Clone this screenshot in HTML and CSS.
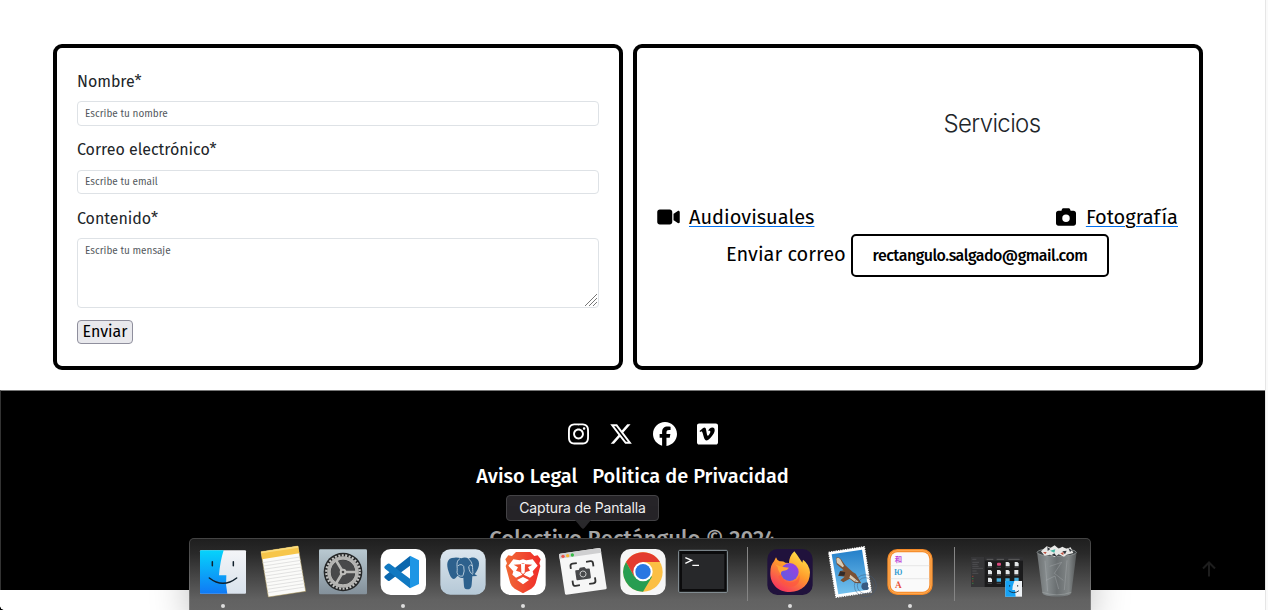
FILE: index.html
```html
<!DOCTYPE html>
<html lang="es">
<head>
<meta charset="utf-8">
<title>Colectivo Rectángulo</title>
<link rel="stylesheet" href="styles.css">
</head>
<body>
<div class="page">
  <main class="cards">
    <form class="card form">
      <label class="label" for="nombre">Nombre*</label>
      <input class="field field-name" id="nombre" type="text" placeholder="Escribe tu nombre">
      <label class="label label-mail" for="email">Correo electrónico*</label>
      <input class="field" id="email" type="text" placeholder="Escribe tu email">
      <label class="label" for="mensaje">Contenido*</label>
      <div class="area">
        <textarea class="field field-area" id="mensaje" placeholder="Escribe tu mensaje"></textarea>
        <svg class="grip" viewBox="0 0 14 14"><path d="M1 13L13 1M5 13l8-8M9 13l4-4" stroke="#777" stroke-width="1" fill="none"/></svg>
      </div>
      <button class="submit" type="button">Enviar</button>
    </form>
    <section class="card services">
      <h2 class="title">Servicios</h2>
      <div class="links">
        <div class="link-group">
          <svg class="ico-video" viewBox="0 0 576 512"><path d="M0 128C0 92.7 28.7 64 64 64H320c35.3 0 64 28.7 64 64V384c0 35.3-28.7 64-64 64H64c-35.3 0-64-28.7-64-64V128zM559.1 99.8c10.4 5.6 16.9 16.4 16.9 28.2V384c0 11.8-6.5 22.6-16.9 28.2s-23 5-32.9-1.6l-96-64L416 337.1V320 192 174.9l14.2-9.5 96-64c9.8-6.5 22.4-7.2 32.9-1.6z"/></svg>
          <a class="link" href="#">Audiovisuales</a>
        </div>
        <div class="link-group">
          <svg class="ico-camera" viewBox="0 0 512 512"><path d="M149.1 64.8L138.7 96H64C28.7 96 0 124.7 0 160V416c0 35.3 28.7 64 64 64H448c35.3 0 64-28.7 64-64V160c0-35.3-28.7-64-64-64H373.3L362.9 64.8C356.4 45.2 338.1 32 317.4 32H194.6c-20.7 0-39 13.2-45.5 32.8zM256 192a96 96 0 1 1 0 192 96 96 0 1 1 0-192z"/></svg>
          <a class="link" href="#">Fotografía</a>
        </div>
      </div>
      <div class="contact"><span class="contact-text">Enviar correo</span><a class="mail" href="#"><span>rectangulo.salgado@gmail.com</span></a></div>
    </section>
  </main>
  <footer class="footer">
    <div class="social">
      <svg class="s-narrow" viewBox="0 0 448 512"><path d="M224.1 141c-63.6 0-114.9 51.3-114.9 114.9s51.3 114.9 114.9 114.9S339 319.5 339 255.9 287.7 141 224.1 141zm0 189.6c-41.1 0-74.7-33.5-74.7-74.7s33.5-74.7 74.7-74.7 74.7 33.5 74.7 74.7-33.6 74.7-74.7 74.7zm146.4-194.3c0 14.9-12 26.8-26.8 26.8-14.9 0-26.8-12-26.8-26.8s12-26.8 26.8-26.8 26.8 12 26.8 26.8zm76.1 27.2c-1.7-35.9-9.9-67.7-36.2-93.9-26.2-26.2-58-34.4-93.9-36.2-37-2.1-147.9-2.1-184.9 0-35.8 1.7-67.6 9.9-93.9 36.1s-34.4 58-36.2 93.9c-2.1 37-2.1 147.9 0 184.9 1.7 35.9 9.9 67.7 36.2 93.9s58 34.4 93.9 36.2c37 2.1 147.9 2.1 184.9 0 35.9-1.7 67.7-9.9 93.9-36.2 26.2-26.2 34.4-58 36.2-93.9 2.1-37 2.1-147.8 0-184.8zM398.8 388c-7.8 19.6-22.9 34.7-42.6 42.6-29.5 11.7-99.5 9-132.1 9s-102.7 2.6-132.1-9c-19.6-7.8-34.7-22.9-42.6-42.6-11.7-29.5-9-99.5-9-132.1s-2.6-102.7 9-132.1c7.8-19.6 22.9-34.7 42.6-42.6 29.5-11.7 99.5-9 132.1-9s102.7-2.6 132.1 9c19.6 7.8 34.7 22.9 42.6 42.6 11.7 29.5 9 99.5 9 132.1s2.7 102.7-9 132.1z"/></svg>
      <svg class="s-wide" viewBox="0 0 512 512"><path d="M389.2 48h70.6L305.6 224.2 487 464H345L233.7 318.6 106.5 464H35.8L200.7 275.5 26.8 48H172.4L272.9 180.9 389.2 48zM364.4 421.8h39.1L151.1 88h-42L364.4 421.8z"/></svg>
      <svg class="s-wide" viewBox="0 0 512 512"><path d="M512 256C512 114.6 397.4 0 256 0S0 114.6 0 256C0 376 82.7 476.8 194.2 504.5V334.2H141.4V256h52.8V222.3c0-87.1 39.4-127.5 125-127.5c16.2 0 44.2 3.2 55.7 6.4V172c-6-.6-16.5-1-29.6-1c-42 0-58.2 15.9-58.2 57.2V256h83.6l-14.4 78.2H287V510.1C413.8 494.8 512 386.9 512 256h0z"/></svg>
      <svg class="s-narrow" viewBox="0 0 448 512"><path d="M403.2 32H44.8C20.1 32 0 52.1 0 76.8v358.4C0 459.9 20.1 480 44.8 480h358.4c24.7 0 44.8-20.1 44.8-44.8V76.8c0-24.7-20.1-44.8-44.8-44.8zM377 180.8c-1.4 31.5-23.4 74.7-66 129.4-44 57.2-81.3 85.8-111.7 85.8-18.9 0-34.8-17.4-47.9-52.3-25.5-93.3-36.400-148-57.400-148-2.400 0-10.900 5.100-25.400 15.200l-15.200-19.600c37.300-32.800 72.900-69.200 95.200-71.200 25.200-2.400 40.700 14.800 46.500 51.700 20.700 131.200 29.900 151 67.600 91.600 13.500-21.400 20.800-37.700 21.800-48.900 3.500-33.200-25.900-30.900-45.800-22.400 15.900-52.100 46.300-77.400 91.200-76 33.300.9 49 22.500 47.100 64.700z"/></svg>
    </div>
    <nav class="legal"><a href="#">Aviso Legal</a><a href="#">Politica de Privacidad</a></nav>
    <p class="copy">Colectivo Rectángulo © 2024</p>
    <svg class="to-top" viewBox="0 0 14 16"><path d="M7 15.500V1.500M1 7.500l6-6 6 6" fill="none" stroke="#1d1d1d" stroke-width="2"/></svg>
  </footer>
</div>

<div class="tooltip">Captura de Pantalla</div>
<div class="dock">
  <!-- Finder -->
  <svg class="app" viewBox="39 24 180 216">
    <defs>
      <linearGradient id="fb" x1="0" y1="0" x2="0" y2="1"><stop offset="0" stop-color="#06d3fb"/><stop offset="1" stop-color="#1079f5"/></linearGradient>
      <linearGradient id="fw" x1="0" y1="0" x2="0" y2="1"><stop offset="0" stop-color="#f4f5f8"/><stop offset="1" stop-color="#d9e2ec"/></linearGradient>
    </defs>
    <rect x="60" y="61" width="138" height="130" rx="3" fill="url(#fw)"/>
    <path d="M63 61H131Q120 95 117 136H139Q136 165 142 191H63Q60 191 60 188V64Q60 61 63 61Z" fill="url(#fb)"/>
    <path d="M97 95v12M160 95v12M88 144Q129 176 170 144" fill="none" stroke="#10202c" stroke-width="4.500" stroke-linecap="round"/>
    <circle cx="129" cy="228" r="6" fill="#ddd"/>
  </svg>
  <!-- Notes -->
  <svg class="app" viewBox="219 24 180 216">
    <path d="M243 65L354 48L377 184L265 201Z" fill="#fbfbf9" stroke="#b09a58" stroke-width="1.500"/>
    <path d="M243 65L354 48L358 70L246 88Z" fill="#f7c64a"/>
    <path d="M243 65L354 48L355 53L244 70Z" fill="#fbdc7d"/>
    <path d="M248 98l112-17M250 108l112-17M251 118l112-17M253 128l112-17M255 138l112-17M256 148l112-17M258 158l112-17M260 168l112-17M261 178l112-17M263 188l112-17" stroke="#d5d5d5" stroke-width="2"/>
  </svg>
  <!-- Settings -->
  <svg class="app" viewBox="399 24 180 216">
    <defs><linearGradient id="sg" x1="0" y1="0" x2="0" y2="1"><stop offset="0" stop-color="#b9c9d1"/><stop offset="1" stop-color="#83909a"/></linearGradient></defs>
    <rect x="417" y="58" width="144" height="135" rx="4" fill="url(#sg)"/>
    <circle cx="489" cy="126" r="58" fill="#252728"/>
    <circle cx="489" cy="126" r="50" fill="none" stroke="#c4c4c2" stroke-width="7" stroke-dasharray="6 4.470"/>
    <circle cx="489" cy="126" r="42" fill="none" stroke="#b3b3b1" stroke-width="11"/>
    <circle cx="489" cy="126" r="36" fill="#48494a"/>
    <path d="M489 126H530M489 126L468 91M489 126L468 161" stroke="#b8b8b5" stroke-width="8"/>
    <circle cx="489" cy="126" r="10" fill="#c0c0bd"/><circle cx="489" cy="126" r="4" fill="#444"/>
  </svg>
  <!-- Visual Studio Code -->
  <svg class="app" viewBox="-81 24 180 216">
    <rect x="-58" y="57" width="136" height="138" rx="30" fill="#fff"/>
    <path d="M30 78V107L-31 152Q-35 154-38 151L-46 144Q-49 140-45 137Z" fill="#0a67ae"/>
    <path d="M30 175V146L-31 101Q-35 99-38 102L-46 109Q-49 113-45 116Z" fill="#1079c2"/>
    <path d="M30 77L57 91V162L30 175Z" fill="#1e96e5"/>
    <circle cx="9" cy="228" r="6" fill="#ddd"/>
  </svg>
  <!-- PostgreSQL -->
  <svg class="app" viewBox="99 24 180 216">
    <defs><linearGradient id="pg" x1="0" y1="0" x2="0" y2="1"><stop offset="0" stop-color="#dce6ee"/><stop offset="1" stop-color="#b5c8d6"/></linearGradient></defs>
    <rect x="121" y="58" width="136" height="136" rx="30" fill="url(#pg)"/>
    <path d="M163 83C140 83 138 102 146 125C151 141 158 151 166 145L173 137Q182 147 190 143L192 169Q193 179 202 178Q214 178 215 164L217 139L232 138L224 132C238 116 242 94 230 86C221 80 210 84 206 86Q195 80 184 85Q173 82 163 83Z" fill="#2d618d"/>
    <path d="M180 86C165 94 174 112 171 127Q173 141 189 138M205 86C220 97 217 116 219 130M173 108Q184 99 191 109Q195 123 189 137M218 108Q210 101 206 110Q208 129 219 133" fill="none" stroke="#cddbe6" stroke-width="2.500"/>
  </svg>
  <!-- Brave -->
  <svg class="app" viewBox="279 24 180 216">
    <defs><linearGradient id="br" x1="0" y1="0" x2="1" y2="0"><stop offset="0" stop-color="#f06a35"/><stop offset="1" stop-color="#f02b29"/></linearGradient></defs>
    <rect x="301" y="57" width="136" height="138" rx="30" fill="#fff"/>
    <path d="M348 66H391L403 78L413 76L422 88L418 100L421 108L407 160Q404 170 394 176L369 190L344 176Q334 170 331 160L317 108L321 100L316 88L325 76L336 78Z" fill="url(#br)"/>
    <path d="M340 88L359 91L369 88L379 91L398 88L413 107L398 124L401 134L390 143L371 134L378 126L390 122L384 112L397 104L377 103L369 100L361 103L341 104L354 112L348 122L360 126L367 134L348 143L337 134L340 124L325 107Z" fill="#fff"/>
    <path d="M351 150L369 141L387 150L369 163Z" fill="#fff"/>
    <path d="M363 102H375L374 128L369 132L364 128Z" fill="#fff"/>
    <circle cx="369" cy="228" r="6" fill="#ddd"/>
  </svg>
  <!-- Screenshot -->
  <svg class="app" viewBox="459 24 180 216">
    <path d="M480 71L598 54Q601 54 602 57L620 174Q620 177 617 178L499 194Q496 194 495 191L477 75Q477 72 480 71Z" fill="#f6f6f6"/>
    <path d="M480 71L598 54Q601 54 602 57L604 68L479 86L477 75Q477 72 480 71Z" fill="#cfcfd0"/>
    <circle cx="489" cy="79" r="5" fill="#f0544c"/><circle cx="503" cy="77" r="5" fill="#f5b833"/><circle cx="517" cy="75" r="5" fill="#35bd45"/>
    <g transform="rotate(-8 549 131)">
      <path d="M515 112V104Q515 97 522 97H535M563 97H576Q583 97 583 104V114M583 147V157Q583 164 576 164H563M535 164H522Q515 164 515 157V147" fill="none" stroke="#333" stroke-width="5.500"/>
      <path d="M529 118H538L542 112H556L560 118H569Q571 118 571 121V145Q571 148 568 148H530Q527 148 527 145V121Q527 118 529 118Z" fill="#47484a"/>
      <circle cx="549" cy="132" r="9" fill="none" stroke="#ddd" stroke-width="2.500"/>
    </g>
  </svg>
  <!-- Chrome -->
  <svg class="app" viewBox="9 24 180 216">
    <rect x="31" y="57" width="136" height="138" rx="30" fill="#f6f6f6"/>
    <circle cx="99" cy="126" r="59" fill="#fbbf44"/>
    <path d="M99 96H150A59 59 0 0 0 48 96L73 140Z" fill="#e33b2e"/>
    <path d="M48 96A59 59 0 0 0 99 185L126 140L99 126L73 140Z" fill="#279d51"/>
    <circle cx="99" cy="125" r="29" fill="#fff"/><circle cx="99" cy="125" r="23" fill="#2878e2"/>
  </svg>
  <!-- Terminal -->
  <svg class="app" viewBox="189 24 180 216">
    <rect x="206" y="61" width="146" height="126" rx="3" fill="#0b0b0c" stroke="#8e9aa1" stroke-width="3"/>
    <rect x="216" y="72" width="127" height="105" fill="#27282a"/>
    <path d="M226 83L245 91L226 100M247 106H267" fill="none" stroke="#fff" stroke-width="4"/>
  </svg>
  <span class="divider"></span>
  <!-- Firefox -->
  <svg class="app" viewBox="450 24 180 216">
    <defs>
      <linearGradient id="ff" x1=".8" y1="0" x2=".2" y2="1"><stop offset="0" stop-color="#ffe94a"/><stop offset=".45" stop-color="#ff9b2c"/><stop offset="1" stop-color="#f52b62"/></linearGradient>
      <linearGradient id="fp" x1="1" y1="0" x2="0" y2="1"><stop offset="0" stop-color="#a13be2"/><stop offset="1" stop-color="#5b5fe0"/></linearGradient>
    </defs>
    <rect x="472" y="57" width="136" height="138" rx="30" fill="#20123c"/>
    <path d="M553 64Q562 75 570 88L577 98L579 89Q598 103 600 127C600 163 575 186 540 186C505 186 480 162 481 128Q481 105 492 94L498 82Q501 92 509 94Q520 93 526 98L537 99Q538 78 553 64Z" fill="url(#ff)"/>
    <circle cx="539" cy="126" r="27" fill="url(#fp)"/>
    <path d="M495 103Q512 112 537 113Q531 123 520 122Q511 123 513 134Q503 120 503 111Z" fill="#ffa436"/>
    <path d="M513 134Q520 159 543 157Q564 154 568 134Q573 166 542 171Q514 168 505 139Z" fill="#ff553f" opacity=".65"/>
    <circle cx="540" cy="228" r="6" fill="#ddd"/>
  </svg>
  <!-- Mail -->
  <svg class="app" viewBox="0 24 180 216">
    <defs><linearGradient id="ml" x1="0" y1="0" x2="0" y2="1"><stop offset="0" stop-color="#247fc9"/><stop offset="1" stop-color="#75c2ee"/></linearGradient></defs>
    <path d="M26 67L133 50L154 186L48 202Z" fill="#fff" stroke="#fff" stroke-width="4" stroke-dasharray="4 3"/>
    <path d="M35 73L126 59L145 179L55 193Z" fill="url(#ml)"/>
    <path d="M48 84Q55 78 63 88L76 106L88 117Q98 127 107 131L124 160L105 159L89 146L70 157L61 151L74 140L54 137L61 123L71 121L50 103Z" fill="#7b5134"/>
    <path d="M49 86Q55 80 61 88L72 108L68 112L51 99ZM91 134L117 156L105 155L88 143Z" fill="#d9cbb5"/>
    <path d="M60 124L76 127L73 137L56 137Z" fill="#332a29"/>
    <g fill="none" stroke="#42597a" stroke-width="2.500" opacity=".55"><circle cx="136" cy="167" r="33"/><circle cx="136" cy="167" r="24"/></g>
    <path d="M133 158Q145 154 145 164Q141 169 147 174Q143 183 135 179Q127 183 124 171Q124 158 133 158Z" fill="#385b83"/>
  </svg>
  <!-- Character viewer -->
  <svg class="app glyphs" viewBox="180 24 180 216">
    <rect x="202" y="57" width="136" height="138" rx="30" fill="#f58a28"/>
    <rect x="207" y="62" width="126" height="128" rx="26" fill="none" stroke="#ffae56" stroke-width="3"/>
    <rect x="212" y="67" width="116" height="118" rx="20" fill="#fafafa"/>
    <path d="M212 107H328M212 146H328" stroke="#ddd" stroke-width="2"/>
    <text x="224" y="95" fill="#bd4bd8">和</text>
    <text class="latin" x="223" y="135" textLength="24" lengthAdjust="spacingAndGlyphs" fill="#2b99cf">Ю</text>
    <text class="latin" x="225" y="175" textLength="20" lengthAdjust="spacingAndGlyphs" fill="#e94f35">Å</text>
    <circle cx="270" cy="228" r="6" fill="#ddd"/>
  </svg>
  <span class="divider"></span>
  <!-- Minimised Finder window -->
  <svg class="app" viewBox="441 24 180 216">
    <rect x="453" y="81" width="156" height="90" fill="#1b1b1c"/>
    <rect x="453" y="81" width="41" height="90" fill="#363638"/>
    <rect x="494" y="81" width="115" height="11" fill="#303032"/>
    <path d="M457 88h12M457 97h20M457 103h16M457 109h19M457 115h32M457 123h13M457 130h18" stroke="#5b5b5e" stroke-width="2"/>
    <path d="M457 139h3M457 153h3" stroke="#b8472f" stroke-width="3"/><path d="M457 146h3M457 160h3" stroke="#3c9645" stroke-width="3"/>
    <path d="M500 88h20M530 88h22M565 88h34" stroke="#777" stroke-width="2"/>
    <g fill="#e2e5e8"><path d="M504 96h8l4 4v9h-12zM557 96h8l4 4v9h-12zM584 96h8l4 4v9h-12zM504 120h8l4 4v9h-12zM531 120h8l4 4v9h-12zM557 120h8l4 4v9h-12zM504 143h8l4 4v9h-12z"/><rect x="583" y="120" width="12" height="13"/></g>
    <rect x="531" y="98" width="12" height="9" rx="3" fill="#da487e"/>
    <path d="M530 145h13v10h-13zM556 145h13v10h-13zM583 143h13v10h-13z" fill="#42aee0"/>
    <path d="M503 112h13M530 112h13M556 112h14M583 112h13M503 136h13M530 136h13M556 136h14M583 136h13M503 160h13M530 160h13" stroke="#717174" stroke-width="1.500"/>
    <rect x="556" y="153" width="50" height="47" fill="#edf1f5"/><path d="M556 153H583Q577 167 577 180H585L587 200H556Z" fill="#15a2f5"/>
    <path d="M569 165v5M593 165v5M566 182Q581 194 597 182" fill="none" stroke="#142434" stroke-width="2.500"/>
  </svg>
  <!-- Trash -->
  <svg class="app" viewBox="621 24 180 216">
    <defs><linearGradient id="tr"><stop offset="0" stop-color="#6d7172"/><stop offset=".25" stop-color="#878d8f"/><stop offset=".5" stop-color="#696e70"/><stop offset=".8" stop-color="#818687"/><stop offset="1" stop-color="#535657"/></linearGradient></defs>
    <path d="M651 66Q710 91 770 66L754 189Q752 199 711 200Q669 199 667 189Z" fill="url(#tr)"/>
    <ellipse cx="710" cy="67" rx="59" ry="12" fill="#3b3f41" stroke="#a2a7a8" stroke-width="2"/>
    <path d="M663 64L680 49L692 53L704 46L716 56L727 50L739 56L752 52L760 69L740 74L732 80L716 73L704 81L690 74L674 77Z" fill="#e8e8e6"/>
    <path d="M682 51L691 57L683 63ZM703 70L711 80L694 76ZM727 64L740 62L735 73ZM745 54L756 61L750 66Z" fill="#34393f"/>
    <path d="M690 62L706 58L703 68Z" fill="#42b7a4"/><path d="M721 70L731 66L730 76ZM669 66L680 66L676 73Z" fill="#bd5444"/>
    <path d="M675 92L683 184M741 91L733 180M689 109L725 97L703 130L730 151M678 151L705 138L716 177" fill="none" stroke="#b9bebf" stroke-width="3" opacity=".3"/>
    <path d="M667 187Q711 202 754 187" fill="none" stroke="#b4b8b9" stroke-width="2" opacity=".6"/>
  </svg>
</div>
<span class="corner"></span>
</body>
</html>
```
FILE: styles.css
```css
* { box-sizing: border-box; }
body {
  margin: 0;
  height: 610px;
  position: relative;
  overflow: hidden;
  background: #fafafa;
  color: #212529;
  font-family: "Fira Sans", "Noto Sans", sans-serif;
}
a { color: inherit; text-decoration: none; }
.page { width: 1266px; height: 610px; background: #fff; border-right: 1px solid #e6e6e6; }
.cards { display: flex; gap: 10px; padding: 44px 0 20px 53px; }
.card { width: 570px; height: 326px; border: 4px solid #000; border-radius: 9px; }

.form { padding: 22px 20px 0; display: flex; flex-direction: column; align-items: flex-start; }
.label { font-size: 16px; line-height: 24px; margin-bottom: 7px; letter-spacing: -.03px; }
.label-mail { margin-bottom: 8px; }
.field {
  display: block;
  width: 522px;
  height: 24.500px;
  margin: 0 0 13px;
  padding: 1px 7px 0;
  border: 1px solid #dee2e6;
  border-radius: 4px;
  background: #fff;
  font-family: inherit;
  font-size: 10px;
  outline: 0;
}
.field-name { margin-bottom: 12px; }
.field::placeholder { color: #53585d; opacity: 1; }
.area { position: relative; }
.field-area { height: 70px; margin-bottom: 12px; padding-top: 6px; resize: none; }
.grip { position: absolute; right: 1px; top: 55px; width: 14px; height: 14px; }
.submit {
  width: 56px;
  height: 24px;
  padding: 0;
  border: 1px solid #8f8f9d;
  border-radius: 4px;
  background: #e9e9ed;
  color: #000;
  font: 400 16px/20px "Fira Sans", "Noto Sans", sans-serif;
}

.services { padding: 60px 21px 0 20px; color: #000; }
.title {
  margin: 0;
  padding-left: 149px;
  text-align: center;
  color: #212529;
  font: 300 24px/32px Inter, "Liberation Sans", sans-serif;
  letter-spacing: -.65px;
}
.links { display: flex; justify-content: space-between; margin-top: 62px; height: 32px; }
.link-group { display: flex; align-items: center; font-size: 20px; }
.link-group svg { margin-bottom: 2px; }
.ico-video { width: 23px; height: 20px; margin-right: 9px; }
.ico-camera { width: 20px; height: 20px; margin-right: 10px; }
.link { text-decoration: underline; text-decoration-color: #0070f0; text-decoration-thickness: 1px; text-underline-offset: 2px; text-decoration-skip-ink: auto; line-height: 30px; padding-bottom: 2px; }
.contact { display: flex; align-items: center; padding-left: 69px; font-size: 20px; }
.contact-text { width: 119px; margin-right: 6px; white-space: nowrap; line-height: 30px; padding-bottom: 4px; }
.mail {
  display: flex;
  align-items: center;
  justify-content: center;
  width: 258px;
  height: 43px;
  border: 2px solid #000;
  border-radius: 5px;
  font-size: 16px;
  font-weight: 500;
  letter-spacing: -.5px;
}

.footer {
  position: relative;
  width: 1265px;
  height: 200px;
  padding-top: 31px;
  border-top: 1px solid #777;
  border-left: 1px solid #333;
  background: #000;
  color: #fff;
}
.social { display: flex; justify-content: center; gap: 20px; padding-left: 19px; fill: #fff; }
.social svg { height: 24px; }
.s-narrow { width: 21px; }
.s-wide { width: 24px; }
.legal { display: flex; justify-content: center; gap: 15px; margin-top: 15px; padding-right: 1px; font-size: 20px; line-height: 30px; font-weight: 500; white-space: nowrap; }
.copy { margin: 31px 0 0; padding-right: 1px; text-align: center; color: #b0b0b0; font-size: 22px; line-height: 34px; font-weight: 500; letter-spacing: .07px; white-space: nowrap; }
.to-top { position: absolute; right: 49px; top: 170px; width: 14px; height: 16px; }

.tooltip {
  position: absolute;
  left: 506px;
  top: 495px;
  width: 153px;
  height: 26px;
  border: 1px solid #444346;
  border-radius: 4px;
  background: #262428;
  color: #f0f0f0;
  text-align: center;
  font: 400 14px/24px Inter, sans-serif;
  letter-spacing: -.16px;
  white-space: nowrap;
}
.tooltip::after {
  content: "";
  position: absolute;
  left: 68px;
  top: 24px;
  width: 16px;
  height: 9px;
  background: #2b2a2d;
  clip-path: polygon(0 0, 100% 0, 60% 85%, 50% 100%, 40% 85%);
}
.dock {
  position: absolute;
  left: 189px;
  top: 538px;
  width: 902px;
  height: 76px;
  padding: 0 4px;
  display: flex;
  border-radius: 5px 5px 0 0;
  background: linear-gradient(#1e1e1e, #292929 20%, #474747 52%, #626262 82%, #666);
  box-shadow: inset 0 0 0 1px rgba(255, 255, 255, .17), 0 8px 38px rgba(0, 0, 0, .25);
}
.app { width: 60px; height: 72px; flex: none; }
.glyphs { font: 700 22px "Liberation Serif", "Noto Sans CJK SC", serif; }
.latin { font-size: 26px; }
.divider { width: 1px; height: 54px; margin: 9px 12px 0 14px; background: #858585; }
.corner {
  position: absolute;
  left: 0;
  bottom: 0;
  width: 4px;
  height: 4px;
  background: radial-gradient(circle at 100% 0, transparent 3.500px, #000 4px);
}
```
